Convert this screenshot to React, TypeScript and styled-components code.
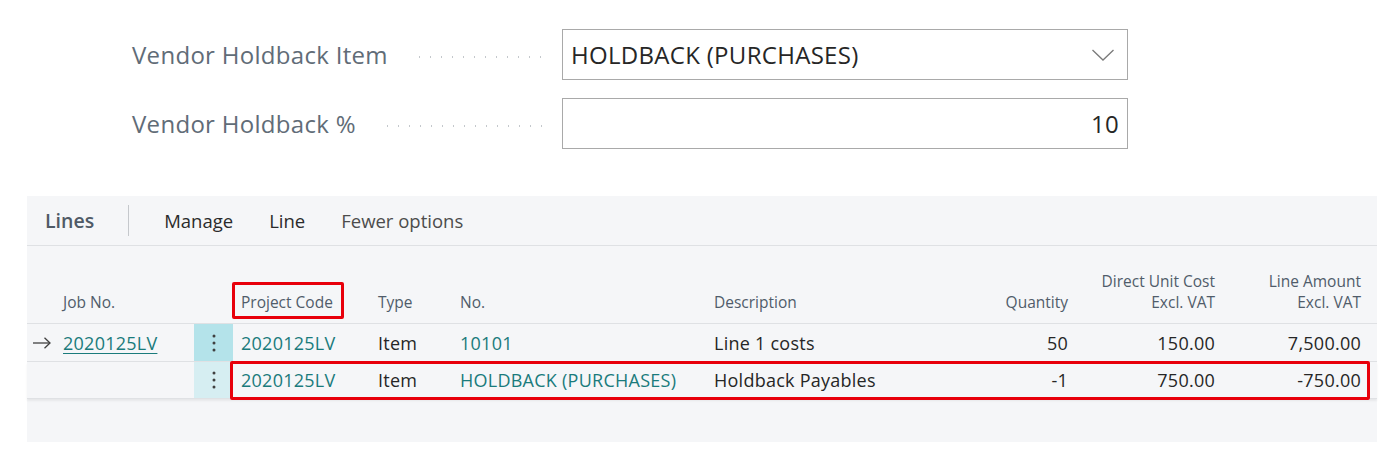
import React from "react";
import styled, { createGlobalStyle } from "styled-components";

const GlobalStyle = createGlobalStyle`
  html, body { margin: 0; padding: 0; background: #ffffff; }
  body { font-family: "Open Sans", "Noto Sans", Arial, sans-serif; }
  * { box-sizing: border-box; }
`;

const Page = styled.div`
  width: 1388px;
  height: 459px;
  overflow: hidden;
  padding-top: 29px;
`;

const Fields = styled.div`
  display: flex;
  flex-direction: column;
  gap: 18px;
  padding-left: 132px;
`;

const FieldRow = styled.div`
  display: grid;
  grid-template-columns: 430px 566px;
  align-items: center;
  height: 51px;
`;

const Label = styled.div`
  display: flex;
  align-items: center;
  font-size: 24px;
  letter-spacing: 0.3px;
  color: #616c77;
  white-space: nowrap;
  padding-right: 14px;
`;

const Leader = styled.span`
  flex: 1;
  margin-left: 26px;
  height: 2px;
  margin-top: 4px;
  background-image: radial-gradient(circle, #c4c8cc 0.9px, transparent 1.1px);
  background-size: 11px 2px;
  background-repeat: repeat-x;
`;

const InputBox = styled.div<{ $align?: "left" | "right" }>`
  height: 51px;
  border: 1px solid #a9a9a9;
  display: flex;
  align-items: center;
  justify-content: ${(p) => (p.$align === "right" ? "flex-end" : "space-between")};
  padding: 0 8px 0 8px;
  font-size: 24px;
  letter-spacing: 0.3px;
  color: #262626;
`;

const Panel = styled.div`
  margin-top: 47px;
  margin-left: 27px;
  width: 1350px;
  background: #f5f6f8;
  padding-bottom: 43px;
`;

const Toolbar = styled.div`
  display: flex;
  align-items: center;
  height: 50px;
  border-bottom: 1px solid #dfe1e4;
  padding-left: 18px;
`;

const Title = styled.div`
  font-size: 19.5px;
  font-weight: 600;
  color: #4f5a66;
`;

const Separator = styled.div`
  width: 1px;
  height: 31px;
  background: #c5c8cc;
  margin: 0 35px 0 34px;
`;

const Action = styled.div<{ $muted?: boolean }>`
  font-size: 18.5px;
  color: ${(p) => (p.$muted ? "#4c4c4c" : "#2b2b2b")};
  margin-right: 36px;
`;

const COLS = "30px 137px 39px 137px 82px 254px 224px 146px 147px 146px 8px";

const HeaderRow = styled.div`
  display: grid;
  grid-template-columns: ${COLS};
  height: 78px;
  align-items: end;
  border-bottom: 1px solid #dfe1e4;
  padding-bottom: 10px;
`;

const HeadCell = styled.div<{ $right?: boolean; $indent?: number }>`
  position: relative;
  font-size: 15.5px;
  line-height: 21px;
  color: #505c6a;
  text-align: ${(p) => (p.$right ? "right" : "left")};
  padding: ${(p) => (p.$right ? "0 8px 0 0" : `0 0 0 ${p.$indent ?? 8}px`)};
  white-space: nowrap;
`;

const RedBox = styled.span`
  position: absolute;
  border: 3px solid #e8000b;
  border-radius: 2px;
  pointer-events: none;
`;

const HeadBox = styled(RedBox)`
  left: -1px;
  top: -10px;
  width: 112px;
  height: 37px;
`;

const Row = styled.div<{ $last?: boolean }>`
  position: relative;
  display: grid;
  grid-template-columns: ${COLS};
  height: ${(p) => (p.$last ? "37px" : "38px")};
  align-items: center;
  border-bottom: 1px solid #dfe1e4;
  box-shadow: ${(p) => (p.$last ? "0 2px 2px rgba(0,0,0,0.06)" : "none")};
`;

const RowBox = styled(RedBox)`
  left: 203px;
  right: 7px;
  top: -1px;
  bottom: -2px;
`;

const Cell = styled.div<{ $right?: boolean; $link?: boolean; $underline?: boolean; $indent?: number }>`
  font-size: 18px;
  letter-spacing: 0.25px;
  color: ${(p) => (p.$link ? "#1a7b7c" : "#262626")};
  text-decoration: ${(p) => (p.$underline ? "underline" : "none")};
  text-underline-offset: 3px;
  text-align: ${(p) => (p.$right ? "right" : "left")};
  padding: ${(p) => (p.$right ? "0 8px 0 0" : `0 0 0 ${p.$indent ?? 8}px`)};
  white-space: nowrap;
`;

const ArrowCell = styled.div`
  display: flex;
  align-items: center;
  padding-left: 5px;
`;

const DotsCell = styled.div<{ $active?: boolean }>`
  align-self: stretch;
  display: flex;
  align-items: center;
  justify-content: center;
  background: ${(p) => (p.$active ? "#b4e3ea" : "#d6eef2")};
`;

const Dots = () => (
  <svg width="4" height="18" viewBox="0 0 4 18">
    <circle cx="2" cy="2" r="1.5" fill="#404040" />
    <circle cx="2" cy="9" r="1.5" fill="#404040" />
    <circle cx="2" cy="16" r="1.5" fill="#404040" />
  </svg>
);

const Arrow = () => (
  <svg width="20" height="12" viewBox="0 0 20 12" fill="none" stroke="#404040" strokeWidth="1.3">
    <line x1="1" y1="6" x2="18" y2="6" />
    <polyline points="12.5,0.8 18,6 12.5,11.2" />
  </svg>
);

const Chevron = () => (
  <svg width="24" height="14" viewBox="0 0 24 14" fill="none" stroke="#7a7a7a" strokeWidth="1.3">
    <polyline points="1.5,2 12,12 22.5,2" />
  </svg>
);

const ChevronWrap = styled.span`
  display: flex;
  margin-right: 4px;
`;

export default function App() {
  return (
    <>
      <GlobalStyle />
      <Page>
        <Fields>
          <FieldRow>
            <Label>
              Vendor Holdback Item
              <Leader />
            </Label>
            <InputBox>
              HOLDBACK (PURCHASES)
              <ChevronWrap>
                <Chevron />
              </ChevronWrap>
            </InputBox>
          </FieldRow>
          <FieldRow>
            <Label>
              Vendor Holdback %
              <Leader />
            </Label>
            <InputBox $align="right">10</InputBox>
          </FieldRow>
        </Fields>

        <Panel>
          <Toolbar>
            <Title>Lines</Title>
            <Separator />
            <Action>Manage</Action>
            <Action>Line</Action>
            <Action $muted>Fewer options</Action>
          </Toolbar>

          <HeaderRow>
            <HeadCell />
            <HeadCell $indent={6}>Job No.</HeadCell>
            <HeadCell />
            <HeadCell>
              Project Code
              <HeadBox />
            </HeadCell>
            <HeadCell>Type</HeadCell>
            <HeadCell>No.</HeadCell>
            <HeadCell>Description</HeadCell>
            <HeadCell $right>Quantity</HeadCell>
            <HeadCell $right>
              Direct Unit Cost
              <br />
              Excl. VAT
            </HeadCell>
            <HeadCell $right>
              Line Amount
              <br />
              Excl. VAT
            </HeadCell>
            <HeadCell />
          </HeaderRow>

          <Row>
            <ArrowCell>
              <Arrow />
            </ArrowCell>
            <Cell $link $underline $indent={6}>2020125LV</Cell>
            <DotsCell $active>
              <Dots />
            </DotsCell>
            <Cell $link>2020125LV</Cell>
            <Cell>Item</Cell>
            <Cell $link>10101</Cell>
            <Cell>Line 1 costs</Cell>
            <Cell $right>50</Cell>
            <Cell $right>150.00</Cell>
            <Cell $right>7,500.00</Cell>
            <Cell />
          </Row>

          <Row $last>
            <ArrowCell />
            <Cell $indent={6} />
            <DotsCell>
              <Dots />
            </DotsCell>
            <Cell $link>2020125LV</Cell>
            <Cell>Item</Cell>
            <Cell $link>HOLDBACK (PURCHASES)</Cell>
            <Cell>Holdback Payables</Cell>
            <Cell $right>-1</Cell>
            <Cell $right>750.00</Cell>
            <Cell $right>-750.00</Cell>
            <Cell />
            <RowBox />
          </Row>
        </Panel>
      </Page>
    </>
  );
}
